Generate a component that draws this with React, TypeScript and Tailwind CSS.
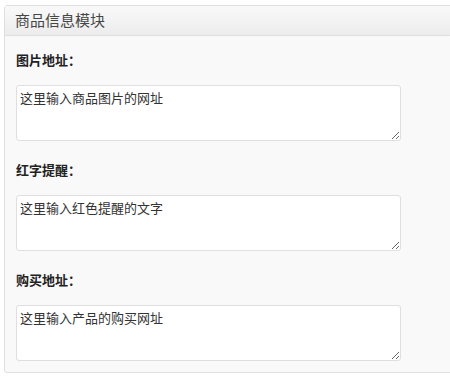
import React from "react";

const fields = [
  { label: "图片地址：", value: "这里输入商品图片的网址" },
  { label: "红字提醒：", value: "这里输入红色提醒的文字" },
  { label: "购买地址：", value: "这里输入产品的购买网址" },
];

const App: React.FC = () => {
  return (
    <div
      className="w-[450px] h-[380px] overflow-hidden bg-white pt-[5px] pl-[4px]"
      style={{ fontFamily: '"Noto Sans CJK SC", "Noto Sans", sans-serif' }}
    >
      <div className="w-[460px] border border-[#dfdfdf] rounded-[3px] bg-[#f9f9f9] text-[#333]">
        {/* header */}
        <div className="h-[30px] flex items-center pl-[10px] border-b border-[#dfdfdf] bg-gradient-to-b from-[#f9f9f9] to-[#ececec] text-[15px] text-[#464646]">
          商品信息模块
        </div>

        <div className="pt-[14px] pb-[11px] pl-[11px]">
          {fields.map((f, i) => (
            <div key={i} className={i > 0 ? "mt-[19px]" : ""}>
              <div className="h-[20px] flex items-center text-[13px] font-bold text-[#222] mb-[15px]">
                {f.label}
              </div>
              <textarea
                defaultValue={f.value}
                className="block w-[385px] h-[56px] bg-white border border-[#dfdfdf] rounded-[3px] px-[3px] py-[3px] text-[13px] leading-[18px] text-[#333] outline-none"
              />
            </div>
          ))}
        </div>
      </div>
    </div>
  );
};

export default App;
